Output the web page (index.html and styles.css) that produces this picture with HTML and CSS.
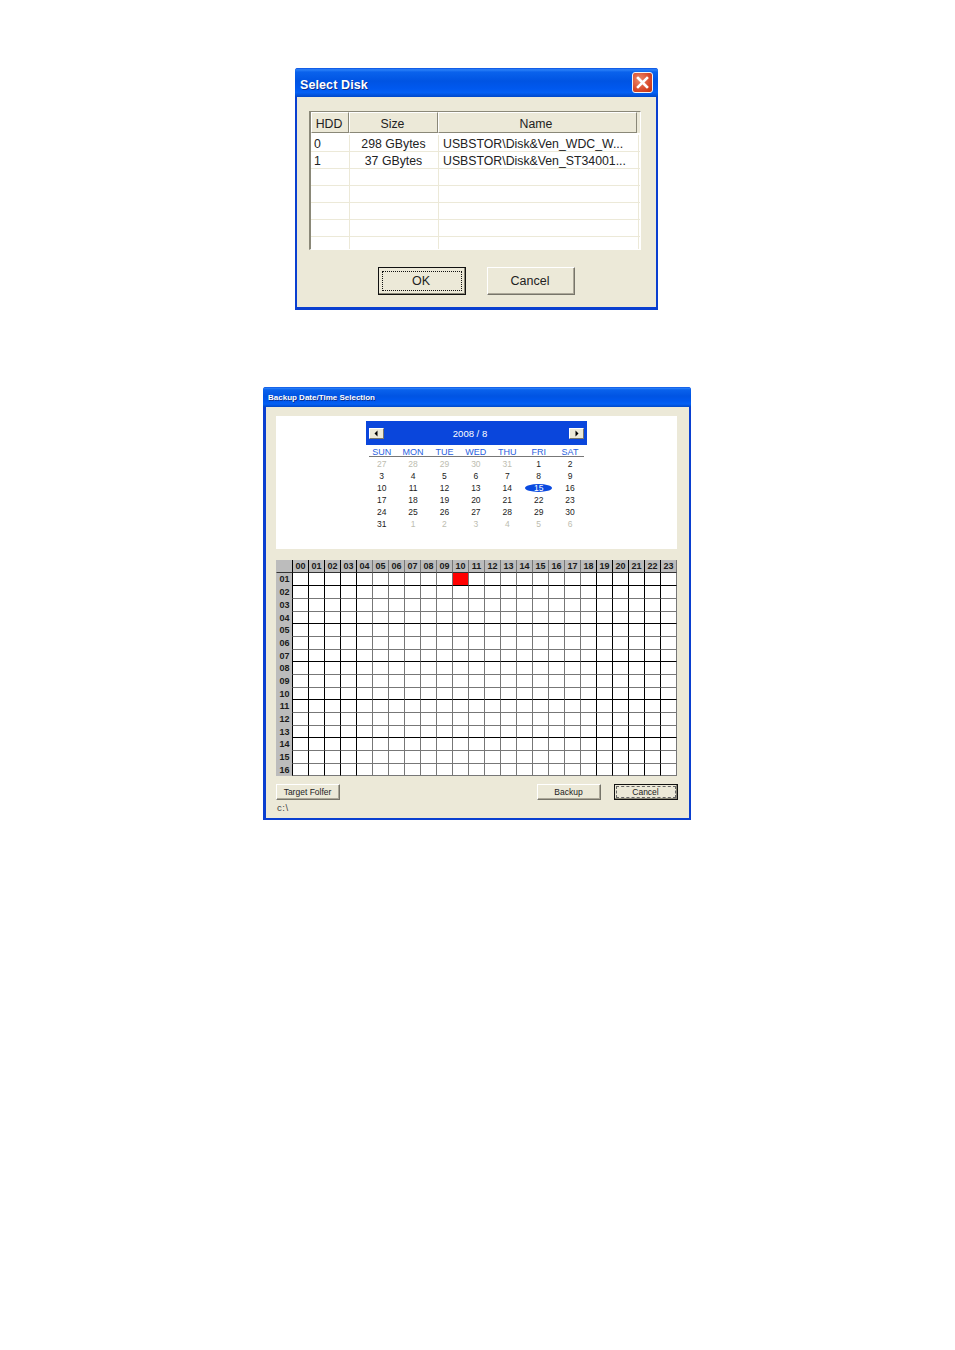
FILE: index.html
```html
<!DOCTYPE html>
<html lang="en">
<head>
<meta charset="utf-8">
<title>Select Disk and Backup Selection</title>
<link rel="stylesheet" href="styles.css">
</head>
<body>
<section class="window disk-window">
  <header class="titlebar disk-title">
    <h1>Select Disk</h1>
    <button class="close" aria-label="Close"><svg viewBox="0 0 21 21" width="21" height="21"><path d="M6 6l9 9M15 6l-9 9" stroke="#fff" stroke-width="2.6" stroke-linecap="square" fill="none"/></svg></button>
  </header>
  <div class="disk-body">
    <div class="list">
      <div class="list-head"><span class="h-hdd">HDD</span><span class="h-size">Size</span><span class="h-name">Name</span></div>
      <div class="list-row"><span class="c-hdd">0</span><span class="c-size">298 GBytes</span><span class="c-name">USBSTOR\Disk&amp;Ven_WDC_W...</span></div>
      <div class="list-row"><span class="c-hdd">1</span><span class="c-size">37 GBytes</span><span class="c-name">USBSTOR\Disk&amp;Ven_ST34001...</span></div>
      <div class="list-row"><span class="c-hdd"></span><span class="c-size"></span><span class="c-name"></span></div>
      <div class="list-row"><span class="c-hdd"></span><span class="c-size"></span><span class="c-name"></span></div>
      <div class="list-row"><span class="c-hdd"></span><span class="c-size"></span><span class="c-name"></span></div>
      <div class="list-row"><span class="c-hdd"></span><span class="c-size"></span><span class="c-name"></span></div>
      <div class="list-row last"><span class="c-hdd"></span><span class="c-size"></span><span class="c-name"></span></div>
    </div>
    <div class="disk-actions">
      <button class="btn big focus"><span>OK</span></button>
      <button class="btn big"><span>Cancel</span></button>
    </div>
  </div>
</section>

<section class="window backup-window">
  <header class="titlebar backup-title"><h2>Backup Date/Time Selection</h2></header>
  <div class="backup-body">
    <div class="panel">
      <div class="calendar">
        <div class="cal-head">
          <button class="arrow" aria-label="Previous"><svg viewBox="0 0 15 11" width="15" height="11"><path d="M5.500 5.500l3-3v6z" fill="#000"/></svg></button>
          <span>2008 / 8</span>
          <button class="arrow" aria-label="Next"><svg viewBox="0 0 15 11" width="15" height="11"><path d="M9.500 5.500l-3-3v6z" fill="#000"/></svg></button>
        </div>
        <div class="dow"><span>SUN</span><span>MON</span><span>TUE</span><span>WED</span><span>THU</span><span>FRI</span><span>SAT</span></div>
        <div class="rule"></div>
        <div class="dates">
          <span class="mute">27</span><span class="mute">28</span><span class="mute">29</span><span class="mute">30</span><span class="mute">31</span><span>1</span><span>2</span>
          <span>3</span><span>4</span><span>5</span><span>6</span><span>7</span><span>8</span><span>9</span>
          <span>10</span><span>11</span><span>12</span><span>13</span><span>14</span><span class="sel">15</span><span>16</span>
          <span>17</span><span>18</span><span>19</span><span>20</span><span>21</span><span>22</span><span>23</span>
          <span>24</span><span>25</span><span>26</span><span>27</span><span>28</span><span>29</span><span>30</span>
          <span>31</span><span class="mute">1</span><span class="mute">2</span><span class="mute">3</span><span class="mute">4</span><span class="mute">5</span><span class="mute">6</span>
        </div>
      </div>
    </div>
    <table class="hours">
      <thead><tr><th></th><th>00</th><th>01</th><th>02</th><th>03</th><th>04</th><th>05</th><th>06</th><th>07</th><th>08</th><th>09</th><th>10</th><th>11</th><th>12</th><th>13</th><th>14</th><th>15</th><th>16</th><th>17</th><th>18</th><th>19</th><th>20</th><th>21</th><th>22</th><th>23</th></tr></thead>
      <tbody>
        <tr><th>01</th><td></td><td></td><td></td><td></td><td></td><td></td><td></td><td></td><td></td><td></td><td class="on"></td><td></td><td></td><td></td><td></td><td></td><td></td><td></td><td></td><td></td><td></td><td></td><td></td><td></td></tr>
        <tr><th>02</th><td></td><td></td><td></td><td></td><td></td><td></td><td></td><td></td><td></td><td></td><td></td><td></td><td></td><td></td><td></td><td></td><td></td><td></td><td></td><td></td><td></td><td></td><td></td><td></td></tr>
        <tr><th>03</th><td></td><td></td><td></td><td></td><td></td><td></td><td></td><td></td><td></td><td></td><td></td><td></td><td></td><td></td><td></td><td></td><td></td><td></td><td></td><td></td><td></td><td></td><td></td><td></td></tr>
        <tr><th>04</th><td></td><td></td><td></td><td></td><td></td><td></td><td></td><td></td><td></td><td></td><td></td><td></td><td></td><td></td><td></td><td></td><td></td><td></td><td></td><td></td><td></td><td></td><td></td><td></td></tr>
        <tr><th>05</th><td></td><td></td><td></td><td></td><td></td><td></td><td></td><td></td><td></td><td></td><td></td><td></td><td></td><td></td><td></td><td></td><td></td><td></td><td></td><td></td><td></td><td></td><td></td><td></td></tr>
        <tr><th>06</th><td></td><td></td><td></td><td></td><td></td><td></td><td></td><td></td><td></td><td></td><td></td><td></td><td></td><td></td><td></td><td></td><td></td><td></td><td></td><td></td><td></td><td></td><td></td><td></td></tr>
        <tr><th>07</th><td></td><td></td><td></td><td></td><td></td><td></td><td></td><td></td><td></td><td></td><td></td><td></td><td></td><td></td><td></td><td></td><td></td><td></td><td></td><td></td><td></td><td></td><td></td><td></td></tr>
        <tr><th>08</th><td></td><td></td><td></td><td></td><td></td><td></td><td></td><td></td><td></td><td></td><td></td><td></td><td></td><td></td><td></td><td></td><td></td><td></td><td></td><td></td><td></td><td></td><td></td><td></td></tr>
        <tr><th>09</th><td></td><td></td><td></td><td></td><td></td><td></td><td></td><td></td><td></td><td></td><td></td><td></td><td></td><td></td><td></td><td></td><td></td><td></td><td></td><td></td><td></td><td></td><td></td><td></td></tr>
        <tr><th>10</th><td></td><td></td><td></td><td></td><td></td><td></td><td></td><td></td><td></td><td></td><td></td><td></td><td></td><td></td><td></td><td></td><td></td><td></td><td></td><td></td><td></td><td></td><td></td><td></td></tr>
        <tr><th>11</th><td></td><td></td><td></td><td></td><td></td><td></td><td></td><td></td><td></td><td></td><td></td><td></td><td></td><td></td><td></td><td></td><td></td><td></td><td></td><td></td><td></td><td></td><td></td><td></td></tr>
        <tr><th>12</th><td></td><td></td><td></td><td></td><td></td><td></td><td></td><td></td><td></td><td></td><td></td><td></td><td></td><td></td><td></td><td></td><td></td><td></td><td></td><td></td><td></td><td></td><td></td><td></td></tr>
        <tr><th>13</th><td></td><td></td><td></td><td></td><td></td><td></td><td></td><td></td><td></td><td></td><td></td><td></td><td></td><td></td><td></td><td></td><td></td><td></td><td></td><td></td><td></td><td></td><td></td><td></td></tr>
        <tr><th>14</th><td></td><td></td><td></td><td></td><td></td><td></td><td></td><td></td><td></td><td></td><td></td><td></td><td></td><td></td><td></td><td></td><td></td><td></td><td></td><td></td><td></td><td></td><td></td><td></td></tr>
        <tr><th>15</th><td></td><td></td><td></td><td></td><td></td><td></td><td></td><td></td><td></td><td></td><td></td><td></td><td></td><td></td><td></td><td></td><td></td><td></td><td></td><td></td><td></td><td></td><td></td><td></td></tr>
        <tr><th>16</th><td></td><td></td><td></td><td></td><td></td><td></td><td></td><td></td><td></td><td></td><td></td><td></td><td></td><td></td><td></td><td></td><td></td><td></td><td></td><td></td><td></td><td></td><td></td><td></td></tr>
      </tbody>
    </table>
    <div class="backup-actions">
      <button class="btn small"><span>Target Folfer</span></button>
      <button class="btn small push"><span>Backup</span></button>
      <button class="btn small focus"><span>Cancel</span></button>
    </div>
    <p class="path">c:\</p>
  </div>
</section>
</body>
</html>
```

FILE: styles.css
```css
* { box-sizing: border-box; }
html, body { margin: 0; padding: 0; background: #fff; }
body {
  width: 955px;
  height: 1350px;
  overflow: hidden;
  padding-top: 68px;
  font-family: "Liberation Sans", Arial, sans-serif;
  color: #222;
}

.window {
  display: flex;
  flex-direction: column;
  background: #0a3fd0;
  border-radius: 3px 3px 0 0;
}
.disk-window { width: 363px; height: 242px; margin-left: 295px; padding: 0 2px 3px; }
.backup-window { width: 428px; height: 433px; margin: 77px 0 0 263px; padding: 0 2px 2px 3px; }

.titlebar {
  display: flex;
  align-items: center;
  justify-content: space-between;
  background: linear-gradient(#0a50e0 0, #2a80f8 6%, #0a62ec 14%, #0054e3 45%, #0058ee 70%, #0460f4 85%, #0048c8 100%);
  color: #fff;
  border-radius: 3px 3px 0 0;
  flex: none;
}
.disk-title { height: 29px; margin: 0 -2px; padding: 3px 5px 0 5px; }
.backup-title { height: 20px; margin: 0 -2px 0 -3px; padding: 1px 4px 0 5px; }
h1, h2 { margin: 0; font-weight: 700; text-shadow: 1px 1px 0 #0a2f90; }
h1 { font-size: 12.5px; letter-spacing: 0.1px; padding-top: 2px; }
h2 { font-size: 8px; }

.close {
  display: block;
  width: 21px;
  height: 21px;
  padding: 0;
  border: 1px solid #f4f4f4;
  border-radius: 3px;
  background: radial-gradient(circle at 35% 35%, #ec8a6c, #d8492a 60%, #bf3210);
  margin-top: -3px;
}
.close svg { display: block; margin: -1px; }

.disk-body {
  flex: 1;
  background: #ece9d8;
  padding: 14px 0 0 12px;
}
.list {
  width: 332px;
  height: 139px;
  background: #fff;
  border-style: solid;
  border-width: 1px 1px 1px 2px;
  border-color: #8a8878 #fff #fff #8a8878;
  overflow: hidden;
}
.list-head {
  display: flex;
  height: 21px;
  background: #ece9d8;
  font-size: 12.3px;
  line-height: 22px;
  text-align: center;
  margin-bottom: 2px;
}
.list-head span {
  border: 1px solid;
  border-color: #fff #8a8878 #8a8878 #fff;
}
.h-hdd { width: 38px; padding-right: 2px; }
.h-size { width: 89px; padding-right: 2px; }
.h-name { width: 199px; padding-right: 3px; }
.list-row {
  display: flex;
  height: 17px;
  font-size: 12.3px;
  line-height: 18px;
  border-bottom: 1px solid #ece9d8;
}
.list-row.last { border-bottom: 0; }
.list-row span {
  display: block;
  white-space: nowrap;
  border-right: 1px solid #ece9d8;
}
.c-hdd { width: 39px; padding-left: 3px; }
.c-size { width: 89px; padding-right: 1px; text-align: center; }
.c-name { width: 200px; padding-left: 4px; }

.disk-actions {
  display: flex;
  gap: 21px;
  margin: 17px 0 0 69px;
}

.btn {
  display: block;
  padding: 0;
  font-family: inherit;
  color: #222;
  background: #ece9d8;
  border: 1px solid;
  border-color: #fff #77756a #77756a #fff;
  box-shadow: inset -1px -1px 0 #aca899;
}
.btn span { display: block; }
.btn.big { width: 88px; height: 28px; font-size: 12.5px; }
.btn.big span { line-height: 26px; padding-right: 2px; }
.btn.small { width: 64px; height: 16px; font-size: 8.5px; }
.btn.small span { line-height: 14px; padding-right: 1px; }
.btn.focus { border-color: #111; box-shadow: inset -1px -1px 0 #8a8878; padding: 3px; }
.btn.big.focus span { outline: 1px dotted #111; outline-offset: -1px; line-height: 20px; height: 20px; }
.btn.small.focus { padding: 1px; }
.btn.small.focus span { outline: 1px dashed #666; outline-offset: -1px; line-height: 12px; height: 12px; }

.backup-body {
  flex: 1;
  background: #ece9d8;
  padding: 9px 0 0 10px;
}
.panel {
  width: 401px;
  height: 133px;
  background: #fff;
  padding-top: 5px;
}
.calendar { width: 221px; margin: 0 auto; font-size: 8.5px; }
.cal-head {
  display: flex;
  align-items: center;
  justify-content: space-between;
  height: 24px;
  padding: 0 3px;
  background: #0a46dc;
  color: #fff;
  font-size: 9.500px;
}
.cal-head span { margin-left: -13px; }
.arrow {
  display: block;
  width: 15px;
  height: 11px;
  padding: 0;
  background: #ece9d8;
  border: 1px solid;
  border-color: #fff #77756a #77756a #fff;
}
.arrow svg { display: block; margin: -1px; }
.dow, .dates { display: grid; grid-template-columns: repeat(7, 31.4px); text-align: center; }
.dow { height: 11px; line-height: 14px; color: #2a5fe0; font-size: 9px; }
.rule { height: 1px; margin: 0 3px 1px; background: #777; }
.dates { grid-auto-rows: 12px; line-height: 12px; color: #222; }
.dates .mute { color: #bdbdb0; }
.dates .sel {
  margin: 2px;
  line-height: 8px;
  background: #0a4ae0;
  color: #fff;
  border-radius: 50%;
}

.hours {
  width: 401px;
  margin-top: 11px;
  table-layout: fixed;
  border-collapse: separate;
  border-spacing: 0;
  background: #fff;
}
.hours th, .hours td {
  width: 16px;
  padding: 0;
  border-left: 1px solid #777;
  border-bottom: 1px solid #777;
}
.hours th {
  background: #bcbcbc;
  color: #1a1a1a;
  font-size: 9px;
  font-weight: 700;
  line-height: 10px;
  text-align: center;
  overflow: hidden;
}
.hours th:last-child, .hours td:last-child { width: 17px; border-right: 1px solid #777; }
.hours thead tr { height: 13px; }
.hours tbody tr { height: 13px; }
.hours tbody tr:nth-child(3n+4) { height: 12px; }
.hours tbody th { border-left: 1px solid #bcbcbc; border-bottom: 1px solid #bcbcbc; }
.hours thead th:first-child { border-left-color: #bcbcbc; }
.hours tr > :nth-child(n+2):nth-child(-n+6),
.hours tr > :nth-child(n+21) { border-left-color: #000; }
.hours thead th { border-bottom-color: #333; }
.hours tbody tr:nth-child(3n+1) td { border-bottom-color: #000; }
.hours tbody tr:nth-child(16) td { border-bottom-color: #777; }
.hours td.on { background: #f00; }

.backup-actions {
  display: flex;
  margin-top: 8px;
  width: 402px;
  gap: 13px;
}
.push { margin-left: auto; }
.path { margin: 3px 0 0 1px; font-size: 9.5px; line-height: 10px; letter-spacing: 0.5px; color: #444; }
```
